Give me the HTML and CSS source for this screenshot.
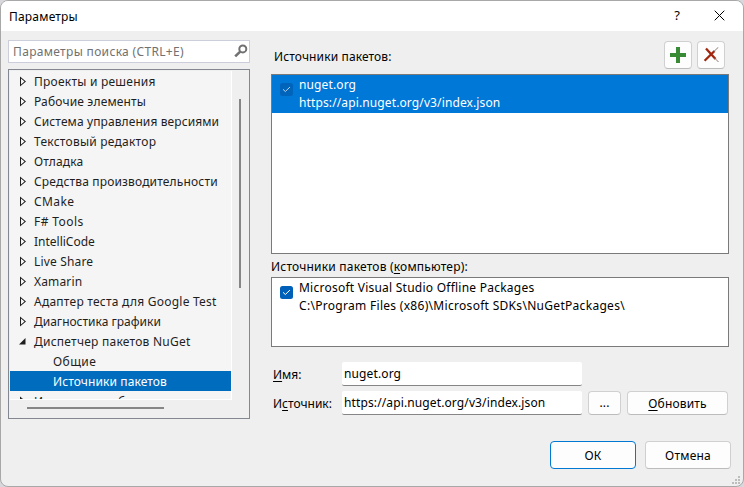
FILE: index.html
```
<!DOCTYPE html>
<html lang="ru">
<head>
<meta charset="utf-8">
<title>Параметры</title>
<link rel="stylesheet" href="styles.css">
</head>
<body>
<div class="window">
  <header class="titlebar">
    <h1>Параметры</h1>
    <span class="help">?</span>
    <svg class="close" width="11" height="11" viewBox="0 0 11 11"><path d="M.7.7l9.6 9.6M10.3.7L.7 10.3" stroke="#000" fill="none"/></svg>
  </header>
  <main class="content">
    <aside class="sidebar">
      <div class="search"><span>Параметры поиска (CTRL+E)</span>
        <svg width="14" height="14" viewBox="0 0 14 14"><circle cx="8.8" cy="4.9" r="3.5" fill="none" stroke="#717171" stroke-width="2"/><path d="M6.2 7.6L1.2 12.4" stroke="#717171" stroke-width="2.6"/></svg>
      </div>
      <div class="tree">
        <ul class="nodes">
          <li><i></i><span class="wide">Проекты и решения</span></li>
          <li><i></i><span>Рабочие элементы</span></li>
          <li><i></i><span class="slight">Система управления версиями</span></li>
          <li><i></i><span class="wide">Текстовый редактор</span></li>
          <li><i></i><span>Отладка</span></li>
          <li><i></i><span>Средства производительности</span></li>
          <li><i></i><span class="wider">CMake</span></li>
          <li><i></i><span class="wider">F# Tools</span></li>
          <li><i></i><span class="tight">IntelliCode</span></li>
          <li><i></i><span>Live Share</span></li>
          <li><i></i><span>Xamarin</span></li>
          <li><i></i><span class="wide">Адаптер теста для Google Test</span></li>
          <li><i></i><span class="tight">Диагностика графики</span></li>
          <li class="open"><i></i><span class="wide">Диспетчер пакетов NuGet</span></li>
          <li class="child"><span class="wider">Общие</span></li>
          <li class="child selected"><span class="slight">Источники пакетов</span></li>
          <li><i></i><span>Инструменты базы данных</span></li>
        </ul>
        <div class="vbar"><b></b></div>
        <div class="hbar"><b></b></div>
      </div>
    </aside>
    <section class="panel">
      <div class="toolbar">
        <span class="caption">Источники пакетов:</span>
        <button class="tool"><svg width="16" height="16" viewBox="0 0 16 16"><path d="M6 0h4v6h6v4h-6v6H6v-6H0V6h6z" fill="#388a34"/></svg></button>
        <button class="tool"><svg width="16" height="16" viewBox="0 0 16 16"><path d="M3 1.5L12.5 12M1.6 13.8L11.5 4" stroke="#a1260d" stroke-width="2.3" fill="none"/><path d="M10.8 4.6L15.3.3M11.5 11l4 4" stroke="#8b7770" fill="none"/></svg></button>
      </div>
      <div class="list first">
        <div class="source active"><span class="check"><svg width="9" height="7" viewBox="0 0 9 7"><path d="M1 3.3l2.3 2.2L8 1" fill="none" stroke="currentColor"/></svg></span><p><span class="name">nuget.org</span><span class="url">https://api.nuget.org/v3/index.json</span></p></div>
      </div>
      <div class="machine">Источники пакетов (<u>к</u>омпьютер):</div>
      <div class="list second">
        <div class="source"><span class="check"><svg width="9" height="7" viewBox="0 0 9 7"><path d="M1 3.3l2.3 2.2L8 1" fill="none" stroke="currentColor"/></svg></span><p><span class="msname">Microsoft Visual Studio Offline Packages</span><span class="mspath">C:\Program Files (x86)\Microsoft SDKs\NuGetPackages\</span></p></div>
      </div>
      <div class="form">
        <label><u>И</u>мя:</label><div class="field"><span class="name">nuget.org</span></div>
        <label class="srclabel">И<u>с</u>точник:</label><div class="field"><span class="url">https://api.nuget.org/v3/index.json</span></div>
        <button class="dots">...</button><button class="refresh"><span><u>О</u>бновить</span></button>
      </div>
    </section>
  </main>
  <footer class="actions"><button class="ok">ОК</button><button>Отмена</button></footer>
  <svg class="grip" width="8" height="8" viewBox="0 0 8 8" fill="#bdbdbd"><path d="M6 0h2v2H6zM3 3h2v2H3zM6 3h2v2H6zM0 6h2v2H0zM3 6h2v2H3zM6 6h2v2H6z"/></svg>
</div>
</body>
</html>
```
FILE: styles.css
```
* { box-sizing: border-box; margin: 0; padding: 0; }
body { width: 744px; height: 487px; overflow: hidden; background: #d8d8dc; font: 12px/18px "Noto Sans", sans-serif; color: #000; }
span, label { white-space: nowrap; }
u { text-decoration: underline; text-underline-offset: 2px; text-decoration-skip-ink: none; }
.window { position: relative; width: 744px; height: 487px; border: 1px solid #a8a8a8; border-radius: 8px; background: #efefef; overflow: hidden; }
.titlebar { height: 30px; background: #fff; display: flex; align-items: center; padding: 0 18px 0 8px; }
h1 { font-size: 12px; font-weight: 400; flex: 1; letter-spacing: .2px; padding-top: 1px; }
.help { font-size: 13px; margin-right: 34px; margin-top: -2px; }
.close { margin-top: -1px; }
.content { display: flex; height: 385px; }
.sidebar { width: 243px; padding: 9px 0 0 7px; flex: none; }
.search { width: 242px; height: 23px; border: 1px solid #cccedb; background: #fff; display: flex; align-items: center; justify-content: space-between; padding: 0 1px 0 4px; color: #717171; letter-spacing: .33px; }
.search span { padding-top: 1px; }
.search svg { margin-top: -1px; }
.tree { width: 242px; height: 350px; margin-top: 6px; border: 1px solid #828790; padding: 1px; display: grid; grid-template: 329px 1fr / 222px 1fr; background: #efefef; }
.nodes { list-style: none; overflow: hidden; background: #f5f5f5; border-right: 1px solid #fff; border-bottom: 1px solid #fff; color: #1e1e1e; letter-spacing: .16px; }
.nodes li { height: 20px; display: flex; align-items: center; padding-left: 10px; }
.nodes span { padding-top: 1px; }
.nodes .slight { letter-spacing: .1px; }
.nodes .wide { letter-spacing: .24px; }
.nodes .wider { letter-spacing: .42px; }
.nodes .tight { letter-spacing: 0; }
.nodes i { width: 14px; height: 11px; flex: none; background: #1e1e1e; clip-path: path(evenodd, "M0 1L6 6L0 11ZM1 3.1L4.5 6L1 8.9Z"); }
.nodes .open { padding-left: 9px; }
.nodes .open i { width: 15px; clip-path: path("M6.5 2.5V9H0Z"); }
.nodes .child { padding-left: 43px; }
.nodes .selected { background: #006cbe; color: #fff; }
.vbar { padding: 28px 0 0 7px; }
.vbar b { display: block; width: 2px; height: 189px; background: #868686; }
.hbar { padding: 7px 0 0 17px; }
.hbar b { display: block; width: 137px; height: 2px; background: #868686; }
.panel { padding: 10px 0 0 27px; }
.toolbar { width: 454px; height: 28px; display: flex; align-items: center; gap: 5px; }
.toolbar .caption { flex: 1; padding: 4px 0 0 3px; letter-spacing: .12px; }
button { font: inherit; background: #fdfdfd; border: 1px solid #d0d0d0; border-bottom-color: #bcbcbc; border-radius: 4px; display: flex; align-items: center; justify-content: center; letter-spacing: .15px; }
.tool { width: 28px; height: 28px; }
.list { width: 458px; border: 1px solid #7a7a7a; background: #fff; }
.first { height: 180px; margin-top: 5px; }
.machine { height: 23px; padding-top: 4px; letter-spacing: .2px; }
.second { height: 70px; }
.source { height: 38px; display: flex; padding: 1px 0 0 8px; gap: 6px; }
.source span { display: block; }
.name, .url { letter-spacing: .12px; }
.msname { letter-spacing: .24px; }
.mspath { letter-spacing: .3px; }
.active { background: #0078d7; color: #fff; }
.check { width: 13px; height: 13px; margin-top: 7px; border-radius: 2.5px; background: #005fb8; color: #fff; }
.check svg { display: block; margin: 3px 2px; }
.active .check { background: #0064bb; color: #b6d4ed; }
.form { display: grid; grid-template-columns: 71px 240px 39px 112px; grid-template-rows: 25px 24px; row-gap: 4px; column-gap: 0; margin-top: 15px; }
.form label { padding: 4px 0 0 2px; }
.field { background: #fff; border-bottom: 1px solid #868686; border-radius: 2px; height: 24px; padding: 3px 2px 0; }
.srclabel { grid-column: 1; }
.dots { margin-left: 6px; width: 33px; height: 24px; }
.refresh { margin-left: 6px; width: 101px; height: 24px; padding-top: 1px; }
.actions { display: flex; justify-content: flex-end; gap: 9px; padding: 25px 12px 0 0; }
.actions button { width: 86px; height: 28px; letter-spacing: .2px; padding-top: 1px; }
.actions .ok { border-color: #0078d4; }
.grip { position: absolute; right: 3px; bottom: 2px; }
```
